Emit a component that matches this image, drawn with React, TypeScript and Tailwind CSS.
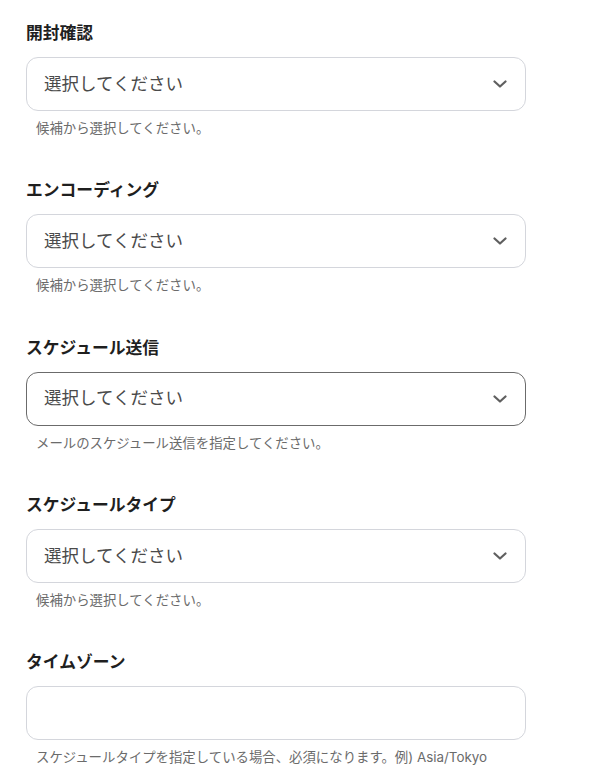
const fields = [
  { label: '開封確認', help: '候補から選択してください。', select: true },
  { label: 'エンコーディング', help: '候補から選択してください。', select: true },
  { label: 'スケジュール送信', help: 'メールのスケジュール送信を指定してください。', select: true, active: true },
  { label: 'スケジュールタイプ', help: '候補から選択してください。', select: true },
  { label: 'タイムゾーン', help: 'スケジュールタイプを指定している場合、必須になります。例) Asia/Tokyo', select: false },
];

function Chevron() {
  return (
    <svg width="14" height="8" viewBox="0 0 14 8" fill="none" className="text-[#5f5f5f]">
      <path d="M1.5 1.5 L7 6.5 L12.5 1.5" stroke="currentColor" strokeWidth="2.2" strokeLinecap="round" strokeLinejoin="round" />
    </svg>
  );
}

export default function App() {
  return (
    <div
      className="min-h-screen bg-white pt-[22px] pl-[26px] text-[#222]"
      style={{ fontFamily: 'Inter, "Noto Sans CJK JP", sans-serif' }}
    >
      <div className="flex w-[500px] flex-col gap-[42.3px]">
        {fields.map((f) => (
          <div key={f.label}>
            <div className="text-[16.8px] font-bold leading-[22px] text-[#1f1f1f]">{f.label}</div>
            <div
              className={`mt-[13px] flex h-[54px] items-center justify-between rounded-[12px] border bg-white pl-[17px] pr-[18px] ${
                f.active ? 'border-[#6b6b6b]' : 'border-[#d4d6dc]'
              }`}
            >
              {f.select && (
                <>
                  <span className="text-[17.5px] text-[#4a4a4a]">選択してください</span>
                  <Chevron />
                </>
              )}
            </div>
            <div className="mt-[8px] pl-[10px] text-[13.4px] leading-[18px] text-[#6b6b6b]">{f.help}</div>
          </div>
        ))}
      </div>
    </div>
  );
}
